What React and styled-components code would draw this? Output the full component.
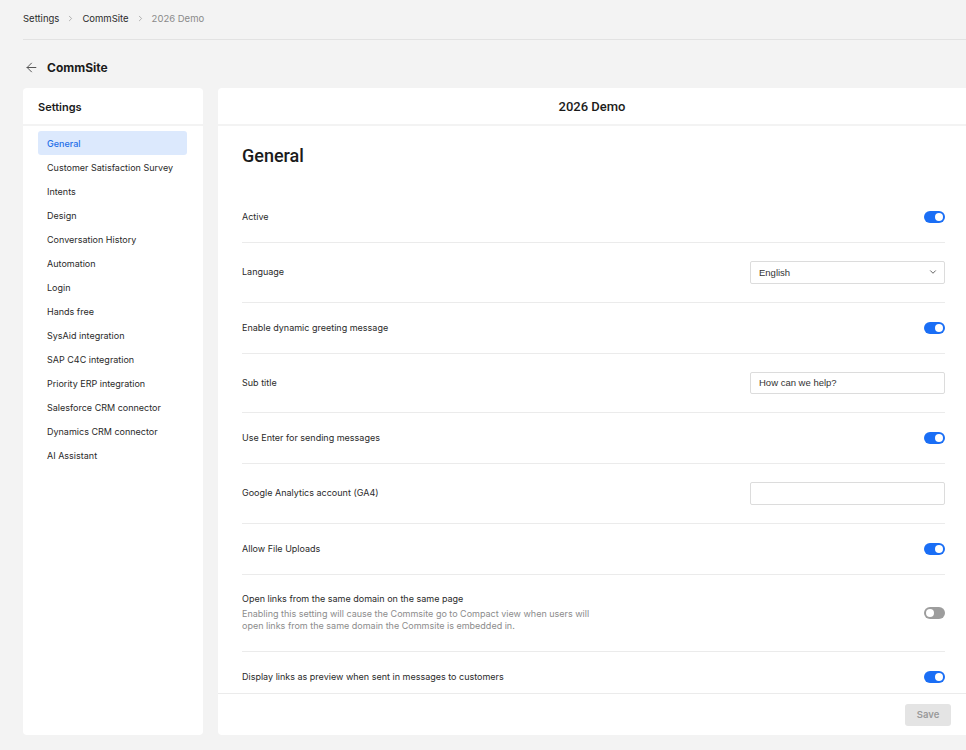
import React from "react";
import styled, { createGlobalStyle } from "styled-components";
import { ArrowLeft, ChevronRight, ChevronDown } from "lucide-react";

const GlobalStyle = createGlobalStyle`
  html, body {
    margin: 0;
    padding: 0;
    background: #f3f3f3;
    font-family: Inter, "Noto Sans", sans-serif;
    color: #222;
    overflow: hidden;
  }
  * { box-sizing: border-box; }
`;

const Page = styled.div`
  height: 750px;
  display: flex;
  flex-direction: column;
  padding: 0 0 15px 23px;
`;

const Breadcrumbs = styled.div`
  height: 40px;
  display: flex;
  align-items: center;
  gap: 7px;
  padding-bottom: 2px;
  border-bottom: 1px solid #e2e2e2;
  font-size: 9.5px;
  color: #333;
  svg {
    color: #999;
  }
`;

const Crumb = styled.span`
  color: ${(p) => (p.$current ? "#8a8a8a" : "#2b2b2b")};
`;

const TitleRow = styled.div`
  height: 48px;
  display: flex;
  align-items: center;
  gap: 8px;
  padding-left: 1px;
  padding-top: 7px;
  font-size: 12px;
  font-weight: 700;
  color: #1b1b1b;
  svg {
    color: #555;
  }
`;

const Columns = styled.div`
  flex: 1;
  display: flex;
  gap: 15px;
  min-height: 0;
`;

const Card = styled.div`
  background: #fff;
  border-radius: 4px;
  display: flex;
  flex-direction: column;
  overflow: hidden;
`;

const Sidebar = styled(Card)`
  width: 180px;
  flex-shrink: 0;
`;

const Main = styled(Card)`
  flex: 1;
  border-radius: 4px 0 0 4px;
`;

const CardHeader = styled.div`
  height: 38px;
  flex-shrink: 0;
  display: flex;
  align-items: center;
  justify-content: ${(p) => (p.$center ? "center" : "flex-start")};
  padding: 1px 15px 0;
  border-bottom: 2px solid #f3f3f3;
  font-family: ${(p) => (p.$center ? "Roboto, sans-serif" : "Inter, sans-serif")};
  font-size: ${(p) => (p.$center ? "13px" : "11px")};
  font-weight: ${(p) => (p.$center ? 500 : 600)};
  color: #1b1b1b;
`;

const NavList = styled.div`
  display: flex;
  flex-direction: column;
  padding: 5px 16px 0 15px;
`;

const NavItem = styled.div`
  height: 24px;
  display: flex;
  align-items: center;
  padding-left: 9px;
  border-radius: 3px;
  font-size: 9px;
  color: ${(p) => (p.$active ? "#1f6fe8" : "#2a2a2a")};
  background: ${(p) => (p.$active ? "#dce9fd" : "transparent")};
  font-weight: ${(p) => (p.$active ? 500 : 400)};
`;

const Body = styled.div`
  flex: 1;
  overflow: hidden;
  padding: 0 21px 0 24px;
`;

const Heading = styled.h2`
  margin: 0;
  padding: 20px 0 26px;
  font-family: Roboto, sans-serif;
  font-size: 18px;
  font-weight: 500;
  line-height: 20px;
  color: #1b1b1b;
`;

const Row = styled.div`
  display: flex;
  align-items: center;
  justify-content: space-between;
  padding: 18px 0;
  border-bottom: 1px solid #ebebeb;
  min-height: 51px;
`;

const LabelBlock = styled.div`
  display: flex;
  flex-direction: column;
  gap: 3px;
`;

const Label = styled.div`
  font-size: 9px;
  line-height: 12px;
  color: #2a2a2a;
`;

const Hint = styled.div`
  font-size: 9px;
  line-height: 12.5px;
  color: #8c8c8c;
  max-width: 360px;
`;

const Toggle = styled.div`
  width: 21px;
  height: 12px;
  border-radius: 6px;
  background: ${(p) => (p.$on ? "#1a6ef5" : "#9d9d9d")};
  position: relative;
  flex-shrink: 0;
  &::after {
    content: "";
    position: absolute;
    top: 2px;
    left: ${(p) => (p.$on ? "11px" : "2px")};
    width: 8px;
    height: 8px;
    border-radius: 50%;
    background: #fff;
  }
`;

const Field = styled.div`
  width: 195px;
  height: 22.5px;
  border: 1px solid #dcdcdc;
  border-radius: 2px;
  display: flex;
  align-items: center;
  justify-content: space-between;
  padding: 0 6px 0 8px;
  font-family: "Liberation Sans", Arial, sans-serif;
  font-size: 9.5px;
  color: #333;
  svg {
    color: #444;
  }
`;

const Footer = styled.div`
  height: 42px;
  flex-shrink: 0;
  border-top: 1px solid #ebebeb;
  display: flex;
  align-items: center;
  justify-content: flex-end;
  padding-right: 15px;
`;

const SaveButton = styled.button`
  width: 46px;
  height: 22px;
  border: none;
  border-radius: 3px;
  background: #e4e4e4;
  color: #9a9a9a;
  font-family: Inter, sans-serif;
  font-size: 9.5px;
  font-weight: 600;
`;

const navItems = [
  "General",
  "Customer Satisfaction Survey",
  "Intents",
  "Design",
  "Conversation History",
  "Automation",
  "Login",
  "Hands free",
  "SysAid integration",
  "SAP C4C integration",
  "Priority ERP integration",
  "Salesforce CRM connector",
  "Dynamics CRM connector",
  "AI Assistant",
];

const settings = [
  { label: "Active", toggle: true },
  { label: "Language", select: "English" },
  { label: "Enable dynamic greeting message", toggle: true },
  { label: "Sub title", input: "How can we help?" },
  { label: "Use Enter for sending messages", toggle: true },
  { label: "Google Analytics account (GA4)", input: "" },
  { label: "Allow File Uploads", toggle: true },
  {
    label: "Open links from the same domain on the same page",
    hint: "Enabling this setting will cause the Commsite go to Compact view when users will open links from the same domain the Commsite is embedded in.",
    toggle: false,
  },
  { label: "Display links as preview when sent in messages to customers", toggle: true },
];

const Control = ({ item }) => {
  if (item.select !== undefined)
    return (
      <Field>
        {item.select}
        <ChevronDown size={10} strokeWidth={2} />
      </Field>
    );
  if (item.input !== undefined) return <Field>{item.input}</Field>;
  return <Toggle $on={item.toggle} />;
};

export default function App() {
  return (
    <>
      <GlobalStyle />
      <Page>
        <Breadcrumbs>
          <Crumb>Settings</Crumb>
          <ChevronRight size={9} strokeWidth={2} />
          <Crumb>CommSite</Crumb>
          <ChevronRight size={9} strokeWidth={2} />
          <Crumb $current>2026 Demo</Crumb>
        </Breadcrumbs>
        <TitleRow>
          <ArrowLeft size={15} strokeWidth={1.6} />
          CommSite
        </TitleRow>
        <Columns>
          <Sidebar>
            <CardHeader>Settings</CardHeader>
            <NavList>
              {navItems.map((n, i) => (
                <NavItem key={n} $active={i === 0}>
                  {n}
                </NavItem>
              ))}
            </NavList>
          </Sidebar>
          <Main>
            <CardHeader $center>2026 Demo</CardHeader>
            <Body>
              <Heading>General</Heading>
              {settings.map((s) => (
                <Row key={s.label}>
                  <LabelBlock>
                    <Label>{s.label}</Label>
                    {s.hint && <Hint>{s.hint}</Hint>}
                  </LabelBlock>
                  <Control item={s} />
                </Row>
              ))}
            </Body>
            <Footer>
              <SaveButton>Save</SaveButton>
            </Footer>
          </Main>
        </Columns>
      </Page>
    </>
  );
}
